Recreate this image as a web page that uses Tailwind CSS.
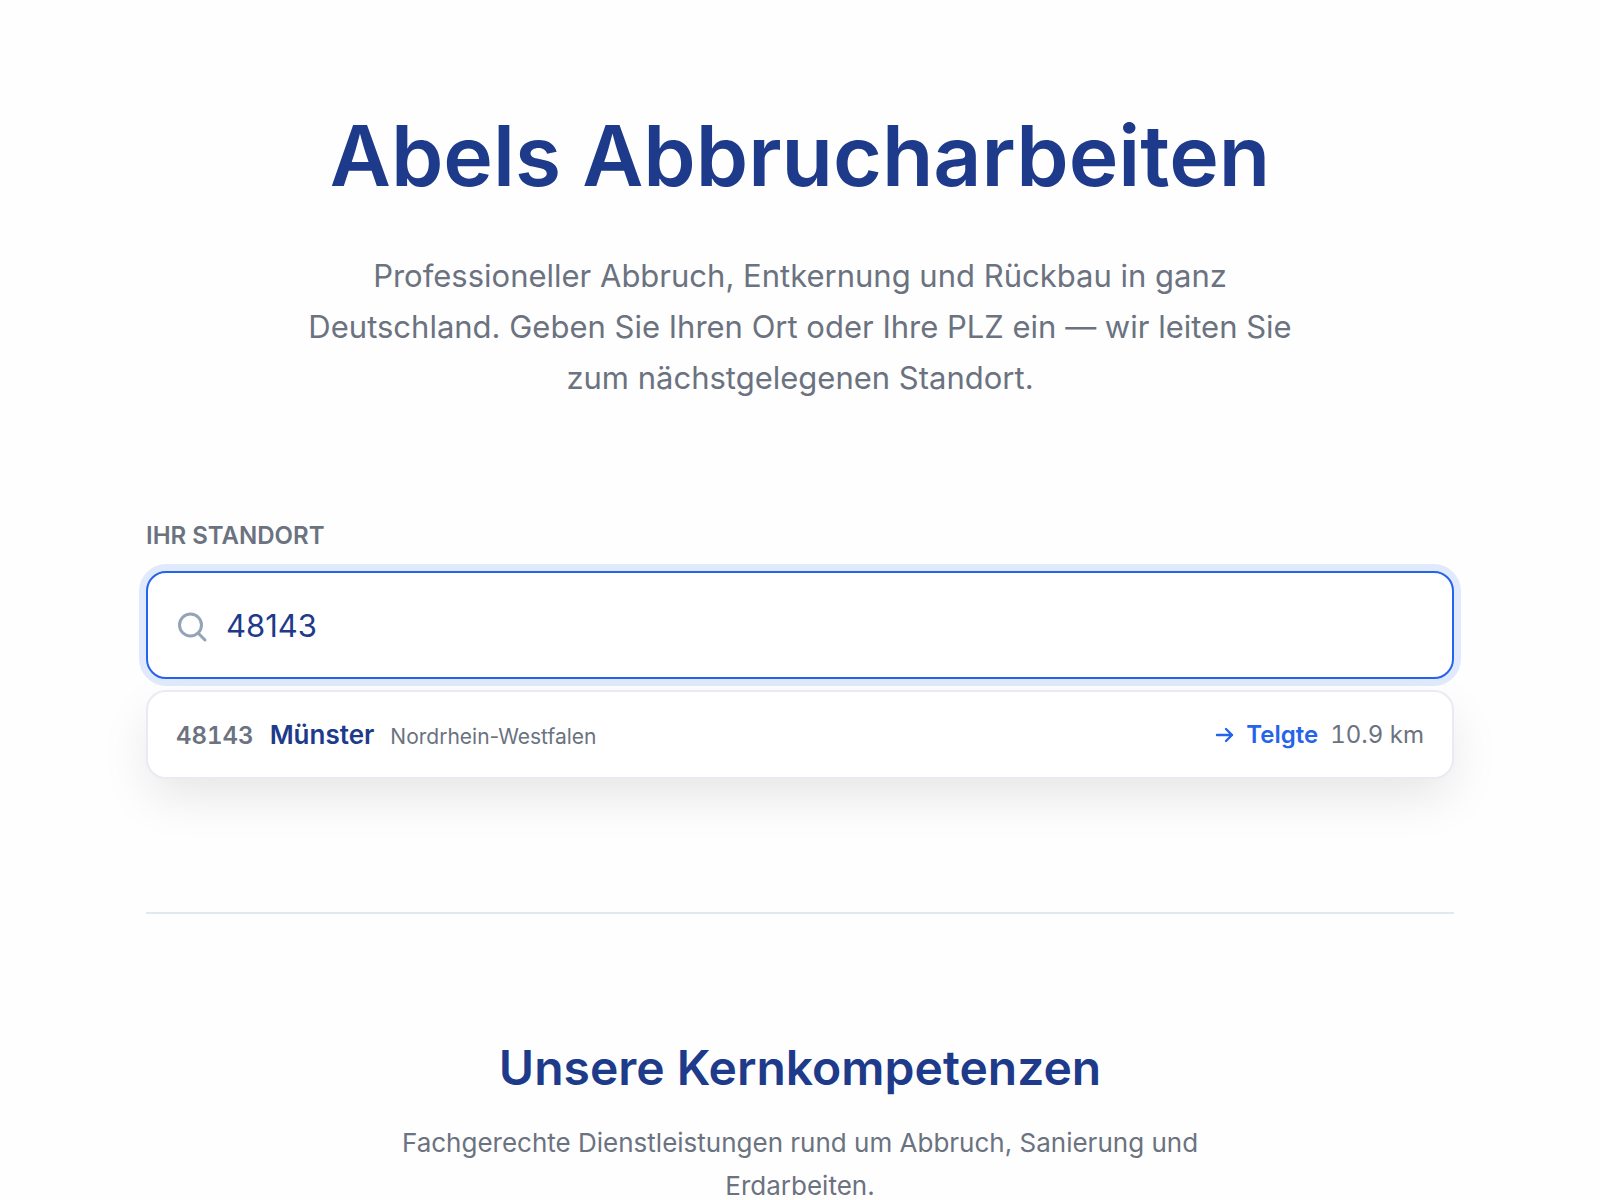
<!DOCTYPE html>
<html lang="de">
<head>
    <meta charset="UTF-8">
    <meta name="viewport" content="width=device-width, initial-scale=1.0">
    <title>Abels Abbrucharbeiten</title>
    <script src="https://cdn.jsdelivr.net/npm/@tailwindcss/browser@4"></script>
</head>
<body class="bg-[#fefefe] font-['Inter','Liberation_Sans',sans-serif] text-[#6b7280]">
    <main class="mx-auto max-w-[1356px] px-6">
        <header class="pt-[102px] text-center">
            <h1 class="text-[84px] leading-[108px] font-semibold text-[#1e3a8a]">Abels Abbrucharbeiten</h1>
            <p class="mx-auto mt-10 max-w-[1020px] text-[31px] leading-[51px]">Professioneller Abbruch, Entkernung und Rückbau in ganz Deutschland. Geben Sie Ihren Ort oder Ihre PLZ ein — wir leiten Sie zum nächstgelegenen Standort.</p>
        </header>

        <!-- Standortsuche -->
        <form class="mt-[115px]">
            <label for="standort" class="block text-[24px] leading-[36px] font-semibold uppercase">Ihr Standort</label>
            <div class="relative mt-[17px]">
                <svg class="absolute top-[38px] left-[28px] h-9 w-9 text-[#94a3b8]" fill="none" viewBox="0 0 36 36" stroke="currentColor" stroke-width="3" stroke-linecap="round">
                    <circle cx="16.500" cy="16" r="11" />
                    <path d="M24.500 24.500 L31 31" />
                </svg>
                <input type="text" id="standort" value="48143" autocomplete="off" class="block h-[108px] w-full rounded-[20px] border-2 border-[#2563eb] bg-white pr-8 pl-[78px] text-[31px] text-[#1e3a8a] ring-[7px] ring-[#e1eafd] outline-none">

                <!-- Vorschläge -->
                <ul id="vorschlaege" class="absolute top-full right-0 left-0 mt-[11px] overflow-hidden rounded-[20px] border-2 border-[#e8ebf3] bg-white shadow-[0_20px_50px_-4px_rgba(0,0,0,0.1)]">
                    <li>
                        <button type="button" class="flex h-[85px] w-full items-center justify-between px-7 text-left">
                            <span class="flex items-baseline gap-4">
                                <span class="text-[24px] font-semibold tabular-nums">48143</span>
                                <span class="text-[26px] font-semibold text-[#1e3a8a]">Münster</span>
                                <span class="text-[21px]">Nordrhein-Westfalen</span>
                            </span>
                            <span class="flex items-center gap-3 text-[24px]">
                                <svg class="h-5 w-5 text-[#2563eb]" fill="none" viewBox="0 0 20 20" stroke="currentColor" stroke-width="2.4" stroke-linecap="round" stroke-linejoin="round">
                                    <path d="M3 10h15M12 4l6 6-6 6" />
                                </svg>
                                <span class="font-semibold text-[#2563eb]">Telgte</span>
                                <span class="tabular-nums">10.9 km</span>
                            </span>
                        </button>
                    </li>
                </ul>
            </div>
        </form>

        <section class="mt-[233px] border-t-2 border-[#e2e8f0] pt-[120px] text-center">
            <h2 class="text-[48px] leading-[68px] font-semibold text-[#1e3a8a]">Unsere Kernkompetenzen</h2>
            <p class="mx-auto mt-[19px] max-w-[860px] text-[26px] leading-[43px]">Fachgerechte Dienstleistungen rund um Abbruch, Sanierung und Erdarbeiten.</p>
        </section>
    </main>
</body>
</html>
